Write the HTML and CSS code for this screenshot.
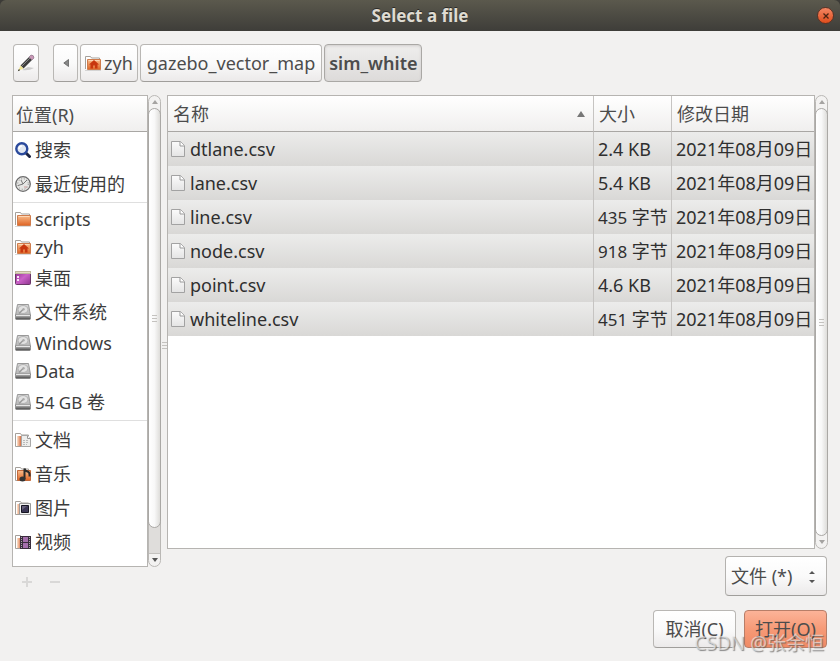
FILE: index.html
```html
<!DOCTYPE html>
<html lang="zh-CN">
<head>
<meta charset="utf-8">
<title>Select a file</title>
<link rel="stylesheet" href="styles.css">
</head>
<body>
<svg width="0" height="0" class="defs" aria-hidden="true">
  <defs>
    <linearGradient id="orange" x1="0" y1="0" x2="0" y2="1"><stop offset="0" stop-color="#f9bd8c"/><stop offset="1" stop-color="#df6424"/></linearGradient>
    <linearGradient id="side" x1="0" y1="0" x2="1" y2="0"><stop offset="0" stop-color="#fbe3cd"/><stop offset="1" stop-color="#d0501f"/></linearGradient>
    <linearGradient id="metal" x1="0" y1="0" x2="0" y2="1"><stop offset="0" stop-color="#d6d6d6"/><stop offset="1" stop-color="#b4b4b4"/></linearGradient>
    <linearGradient id="base" x1="0" y1="0" x2="0" y2="1"><stop offset="0" stop-color="#c4c4c4"/><stop offset="1" stop-color="#454545"/></linearGradient>
    <linearGradient id="purple" x1="0" y1="0" x2="1" y2="1"><stop offset="0" stop-color="#8d2f8b"/><stop offset=".5" stop-color="#cb62c8"/><stop offset="1" stop-color="#8f3490"/></linearGradient>
    <linearGradient id="paper" x1="0" y1="0" x2="0" y2="1"><stop offset="0" stop-color="#fbfbfb"/><stop offset="1" stop-color="#e4e4e4"/></linearGradient>
    <symbol id="folder" viewBox="0 0 16 16">
      <path d="M.5 14V1.500h5l1 1.500h8v2" fill="#fff" stroke="#a5a09b"/>
      <path d="M2.500 4.500h13v10h-13z" fill="url(#orange)" stroke="#cf7c4c"/>
      <path d="M3.500 5.500h11" stroke="#fcd6b4"/>
      <path d="M0 15.500h16" stroke="#999" stroke-opacity=".35"/>
    </symbol>
    <symbol id="home" viewBox="0 0 16 16">
      <use href="#folder"/>
      <path d="M9 5 4 9.500h1.500v4h2.500v-3h2v3h2.500v-4H14z" fill="#c8370f"/>
    </symbol>
    <symbol id="open" viewBox="0 0 16 16">
      <path d="M.5 14.500v-13h5l1 1.500h7v11.500z" fill="#fff" stroke="#a5a09b"/>
      <path d="M2 4h5v10H2z" fill="url(#side)"/>
    </symbol>
    <symbol id="docs" viewBox="0 0 16 16">
      <use href="#open"/>
      <path d="M6.500 3.500h6l3 3v8h-9z" fill="#eeeeec" stroke="#a8a8a8"/>
      <path d="M12.500 3.500v3h3" fill="#fff" stroke="#999"/>
      <path d="M8 8.500h5M8 10.500h6M8 12.500h4" stroke="#bbb" stroke-dasharray="2 1"/>
    </symbol>
    <symbol id="music" viewBox="0 0 16 16">
      <use href="#open"/><path d="M2.500 4.500h13v10h-13z" fill="url(#orange)" stroke="#c26a3d"/>
      <path d="M9.500 13V2.500q.5 2.500 3 3t2 5" fill="none" stroke="#2b2b2b" stroke-width="2"/>
      <ellipse cx="7.500" cy="13" rx="3" ry="2.500" fill="#333"/>
    </symbol>
    <symbol id="pictures" viewBox="0 0 16 16">
      <use href="#open"/><path d="M4.500 3.500h11v11h-11z" fill="#f1f1f0" stroke="#999"/>
      <path d="M6.500 5.500h7v7h-7z" fill="#3c3755" stroke="#161522"/><path d="M7 6h5l-5 4z" fill="#68627d"/>
    </symbol>
    <symbol id="videos" viewBox="0 0 16 16">
      <use href="#open"/><path d="M5 2h11v13H5z" fill="#3a2d3d"/><path d="M8 3h5v5H8zM8 9h5v5H8z" fill="#a56fac"/>
      <path d="M6.500 3v11M14.500 3v11" stroke="#aaa" stroke-dasharray="1 1"/>
    </symbol>
    <symbol id="disk" viewBox="0 0 16 16">
      <path d="M2.500.5h11l2 11H.5z" fill="url(#metal)" stroke="#999"/>
      <ellipse cx="8" cy="5.500" rx="5" ry="4" fill="#e2e2e2" stroke="#b3b3b3"/>
      <path d="m4 9.500 4-4" stroke="#999" stroke-width="1.500"/><circle cx="8.500" cy="5.200" r="1.200" fill="#aaa"/>
      <path d="M.5 11h15v3.500q0 1-1 1h-13q-1 0-1-1z" fill="url(#base)" stroke="#777" stroke-width=".6"/>
      <path d="M1 11.500h14" stroke="#e6e6e6"/>
    </symbol>
    <symbol id="desktop" viewBox="0 0 16 16">
      <rect x=".5" y="1.500" width="15" height="13" rx="1" fill="url(#purple)" stroke="#6a3768"/>
      <path d="M0 1h16v3H0z" fill="#bfb79c"/><path d="M1 2h14v1H1z" fill="#e2dbc3"/><path d="M2 6h2v2H2zM2 9h2v2H2z" fill="#f6e5f6"/>
    </symbol>
    <symbol id="search" viewBox="0 0 16 16">
      <path d="m11 11 3.500 3.500" stroke="#1c2442" stroke-width="3" stroke-linecap="round"/>
      <circle cx="6.800" cy="6.800" r="5.500" fill="#e3e9f2" stroke="#2b4a9c" stroke-width="2.400"/>
      <path d="M4 7q0-3 3-3" fill="none" stroke="#fff" stroke-width="1.500"/>
    </symbol>
    <symbol id="recent" viewBox="0 0 16 16">
      <circle cx="8" cy="8" r="7.300" fill="#e6e6e4" stroke="#6b6b6b" stroke-width="1.300"/>
      <circle cx="8" cy="8" r="5.300" fill="none" stroke="#888" stroke-dasharray="1 1.800"/>
      <path d="M3 9.500 8 8 6 4M8 8l4-4" fill="none" stroke="#777"/>
      <path d="M9 11h3" stroke="#c99"/>
    </symbol>
    <symbol id="file" viewBox="0 0 16 16">
      <path d="M.5.500h9l4 4v11H.5z" fill="url(#paper)" stroke="#a2a2a2"/>
      <path d="M9 .5v4.500h4.500" fill="#fff" stroke="#999"/>
    </symbol>
  </defs>
</svg>
<header class="titlebar">
  <h1>Select a file</h1>
  <button class="close" aria-label="关闭"><svg viewBox="0 0 16 16" width="16" height="16"><path d="m5.500 5.500 5 5m0-5-5 5" stroke="#4a2312" stroke-width="1.300"/></svg></button>
</header>
<main class="dialog">
  <nav class="pathbar">
    <button class="btn edit" aria-label="输入文件名"><svg viewBox="0 0 18 18" width="18" height="18"><path d="M5 16q7 1 12-2l-6-1z" fill="#ccc"/><path d="M3.500 11.500 12 3l3 3-8.500 8.500z" fill="#3d3d3d"/><path d="m5 12 8-8" stroke="#888"/><path d="m12 3 2-2q3 0 3 3l-2 2z" fill="#c998b7" stroke="#82667a" stroke-width=".6"/><path d="M3.500 11.500 1 17l5.500-2.500z" fill="#efe494"/><path d="M2 15 .8 17.200 3 16.300z" fill="#222"/></svg></button>
    <button class="btn back" aria-label="后退"><svg viewBox="0 0 6 8" width="6" height="8"><path d="M5.500.5v7L.8 4z" fill="#888" stroke="#555" stroke-width=".7"/></svg></button>
    <button class="btn folder"><svg class="icon"><use href="#home"/></svg><span>zyh</span></button>
    <button class="btn">gazebo_vector_map</button>
    <button class="btn current" aria-pressed="true">sim_white</button>
  </nav>
  <div class="panes">
    <section class="places">
      <div class="scroller">
        <div class="frame">
          <h2 class="heading">位置(R)</h2>
          <ul>
            <li><button><svg class="icon"><use href="#search"/></svg>搜索</button></li>
            <li><button><svg class="icon"><use href="#recent"/></svg>最近使用的</button></li>
          </ul>
          <ul>
            <li class="short"><button><svg class="icon"><use href="#folder"/></svg>scripts</button></li>
            <li class="short"><button><svg class="icon"><use href="#home"/></svg>zyh</button></li>
            <li><button><svg class="icon"><use href="#desktop"/></svg>桌面</button></li>
            <li><button><svg class="icon"><use href="#disk"/></svg>文件系统</button></li>
            <li class="short"><button><svg class="icon"><use href="#disk"/></svg>Windows</button></li>
            <li class="short"><button><svg class="icon"><use href="#disk"/></svg>Data</button></li>
            <li><button><svg class="icon"><use href="#disk"/></svg><span><span class="latin">54 GB</span> 卷</span></button></li>
          </ul>
          <ul>
            <li><button><svg class="icon"><use href="#docs"/></svg>文档</button></li>
            <li><button><svg class="icon"><use href="#music"/></svg>音乐</button></li>
            <li><button><svg class="icon"><use href="#pictures"/></svg>图片</button></li>
            <li><button><svg class="icon"><use href="#videos"/></svg>视频</button></li>
          </ul>
        </div>
        <div class="scrollbar"><i class="up"></i><div class="thumb"><i class="grip"></i></div><div class="rest"></div><i class="down active"></i></div>
      </div>
      <div class="tools">
        <button disabled aria-label="添加"><svg viewBox="0 0 10 10" width="10" height="10"><path d="M5 0v10M0 5h10" stroke="#d9d8d7" stroke-width="2"/></svg></button>
        <button disabled aria-label="删除"><svg viewBox="0 0 10 10" width="10" height="10"><path d="M0 5h10" stroke="#d9d8d7" stroke-width="2"/></svg></button>
      </div>
    </section>
    <div class="handle"><i class="grip"></i></div>
    <section class="files">
      <div class="scroller">
        <div class="frame">
          <table>
            <colgroup><col><col class="size"><col class="date"></colgroup>
            <thead><tr><th aria-sort="ascending"><div class="sort">名称<i></i></div></th><th>大小</th><th>修改日期</th></tr></thead>
            <tbody>
              <tr><td><div class="name"><svg class="icon"><use href="#file"/></svg>dtlane.csv</div></td><td>2.4 KB</td><td>2021年08月09日</td></tr>
              <tr><td><div class="name"><svg class="icon"><use href="#file"/></svg>lane.csv</div></td><td>5.4 KB</td><td>2021年08月09日</td></tr>
              <tr><td><div class="name"><svg class="icon"><use href="#file"/></svg>line.csv</div></td><td><span class="latin">435</span> 字节</td><td>2021年08月09日</td></tr>
              <tr><td><div class="name"><svg class="icon"><use href="#file"/></svg>node.csv</div></td><td><span class="latin">918</span> 字节</td><td>2021年08月09日</td></tr>
              <tr><td><div class="name"><svg class="icon"><use href="#file"/></svg>point.csv</div></td><td>4.6 KB</td><td>2021年08月09日</td></tr>
              <tr><td><div class="name"><svg class="icon"><use href="#file"/></svg>whiteline.csv</div></td><td><span class="latin">451</span> 字节</td><td>2021年08月09日</td></tr>
            </tbody>
          </table>
        </div>
        <div class="scrollbar"><i class="up"></i><div class="thumb"><i class="grip"></i></div><i class="down"></i></div>
      </div>
      <div class="filter">
        <select aria-label="文件类型"><option>文件 (*)</option></select>
        <svg viewBox="0 0 8 14" width="8" height="14"><path d="m1 4 3-3 3 3zM1 10l3 3 3-3z" fill="#555"/></svg>
      </div>
    </section>
  </div>
  <footer class="actions">
    <button class="btn">取消(C)</button>
    <button class="btn primary">打开(O)</button>
  </footer>
  <div class="watermark">CSDN @张余恒</div>
</main>
</body>
</html>
```

FILE: styles.css
```css
* { box-sizing: border-box; }
html { background: #3c3b37; }
body {
  margin: 0;
  min-height: 100vh;
  display: flex;
  flex-direction: column;
  font-family: "Noto Sans", "Noto Sans CJK SC", sans-serif;
  font-size: 18px;
  line-height: 24px;
  color: #4c4c4c;
}
button, select { font: inherit; color: inherit; margin: 0; }
h1, h2, ul { margin: 0; padding: 0; }
ul { list-style: none; }
.defs { position: absolute; }
.icon { width: 16px; height: 16px; flex: none; }
.latin { font-size: 17px; }

.titlebar {
  position: relative;
  height: 31px;
  display: flex;
  align-items: center;
  justify-content: center;
  border-radius: 6px 6px 0 0;
  background: linear-gradient(#5b594d, #3e3d39);
}
.titlebar h1 { font-size: 17px; font-weight: 700; color: #dfdbd2; text-shadow: 0 -1px #2c2b28; }
.close {
  position: absolute;
  right: 6px;
  top: 7px;
  width: 17px;
  height: 17px;
  padding: 0;
  display: grid;
  place-items: center;
  border: 1px solid #5c3224;
  border-radius: 50%;
  background: linear-gradient(#f48663, #df4d1c);
}

.dialog {
  position: relative;
  flex: 1;
  display: flex;
  flex-direction: column;
  padding: 13px 12px;
  background: #f2f1f0;
}
.pathbar { display: flex; gap: 2px; margin: 0 1px 13px; }
.btn {
  height: 38px;
  padding: 0 6px;
  display: flex;
  align-items: center;
  justify-content: center;
  gap: 3px;
  border: 1px solid #b9b7b4;
  border-bottom-color: #a09e9b;
  border-radius: 4px;
  background: linear-gradient(#fff, #fafafa 50%, #eceaea);
}
.pathbar .folder { padding: 0 4px; }
.pathbar .edit { width: 26px; padding: 0; margin-right: 12px; }
.pathbar .back { width: 25px; padding: 0; }
.pathbar .current {
  padding: 0 4px;
  font-weight: 600;
  border-color: #aaa8a5;
  background: linear-gradient(#efeeed, #dddbda);
  box-shadow: inset 0 1px 3px #cfcdcb;
}

.panes { flex: 1; display: flex; margin-bottom: 14px; }
.places { width: 149px; display: flex; flex-direction: column; }
.files { flex: 1; display: flex; flex-direction: column; gap: 7px; }
.scroller { flex: 1; display: flex; }
.frame { flex: 1; background: #fff; border: 1px solid #b6b4b1; }
.heading, th {
  height: 36px;
  font-size: 18px;
  font-weight: 400;
  text-align: left;
  background: linear-gradient(#fff, #f0efee);
  border-bottom: 1px solid #a9a7a4;
}
.heading { padding: 7px 3px; line-height: 24px; margin-bottom: 1px; }
.frame ul + ul { border-top: 1px solid #dfdfdf; padding-top: 2px; margin-top: 1px; }
.places li button {
  width: 100%;
  height: 34px;
  padding: 0 2px;
  display: flex;
  align-items: center;
  gap: 4px;
  border: 0;
  background: none;
  text-align: left;
  white-space: nowrap;
  color: #3c3c3c;
}
.places li.short button { height: 28px; }
.tools { height: 29px; display: flex; align-items: center; gap: 18px; padding: 0 10px; }
.tools button { width: 10px; height: 10px; padding: 0; border: 0; background: none; display: flex; }

.scrollbar {
  width: 13px;
  display: flex;
  flex-direction: column;
  border: 1px solid #bab8b5;
  border-radius: 7px;
  background: #f3f2f1;
}
.up, .down { height: 12px; display: grid; place-items: center; }
.up::after, .down::after { content: ""; border: 3px solid transparent; border-top: 0; border-bottom: 4px solid #a5a3a1; }
.down::after { border-top: 4px solid #a5a3a1; border-bottom: 0; }
.down.active::after { border-top-color: #555; }
.thumb {
  position: relative;
  z-index: 1;
  flex: 1;
  display: grid;
  place-items: center;
  margin: 0 -1px;
  border: 1px solid #aaa8a5;
  border-radius: 7px;
  background: linear-gradient(90deg, #fff, #f8f8f8 50%, #deddda);
}
.rest { height: 32px; margin-top: -6px; background: #dfdddb; border-bottom: 1px solid #c4c2bf; }
.grip { width: 5px; height: 7px; background: repeating-linear-gradient(#c4c2bf 0 1px, transparent 1px 3px); }
.handle { width: 6px; display: grid; place-items: center; }

table { width: 100%; border-collapse: separate; border-spacing: 0; table-layout: fixed; }
.size { width: 78px; }
.date { width: 143px; }
th { padding: 0 5px; }
th:first-child { padding-right: 8px; }
th + th, td + td { border-left: 1px solid #c6c4c2; }
.sort { display: flex; align-items: center; justify-content: space-between; }
.sort i { border: 4px solid transparent; border-top: 0; border-bottom: 6px solid #777; }
tbody td { height: 34px; padding: 0 4px; white-space: nowrap; color: #2f2f2f; background: linear-gradient(#ececeb, #d9d8d6); }
tbody td:first-child { padding: 0 3px; }
.name { display: flex; align-items: center; gap: 3px; }

.filter { position: relative; align-self: flex-end; margin-right: 1px; }
.filter select {
  width: 102px;
  height: 40px;
  padding: 0 5px;
  appearance: none;
  border: 1px solid #b4b2af;
  border-bottom-color: #a09e9b;
  border-radius: 4px;
  background: linear-gradient(#fff, #fafafa 50%, #eceaea);
}
.filter svg { position: absolute; right: 11px; top: 14px; pointer-events: none; }
.actions { display: flex; justify-content: flex-end; gap: 8px; padding-right: 1px; }
.actions .btn { width: 83px; }
.actions .primary { border-color: #b87e68; background: linear-gradient(#fcb398, #f69a77 50%, #f08b65); }
.watermark {
  position: absolute;
  right: 16px;
  bottom: 5px;
  font-size: 19px;
  line-height: 26px;
  color: rgba(235, 235, 235, .65);
  text-shadow: 1px 1px 1px rgba(90, 90, 90, .7);
  pointer-events: none;
}
```
